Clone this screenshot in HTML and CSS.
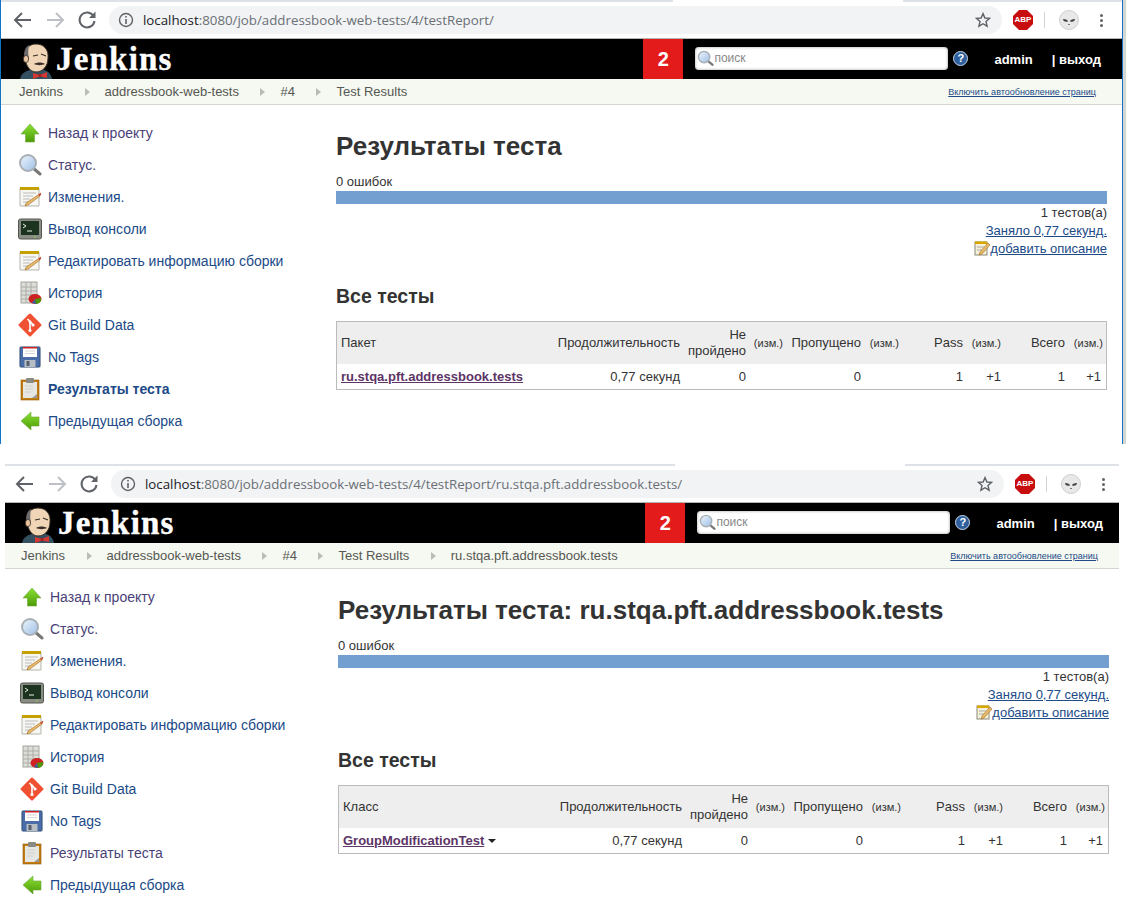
FILE: index.html
```html
<!DOCTYPE html>
<html lang="ru">
<head>
    <meta charset="UTF-8">
    <title>Jenkins test report</title>
    <link rel="stylesheet" href="styles.css">
</head>
<body>
    <svg class="sprite" xmlns="http://www.w3.org/2000/svg">
        <defs>
            <linearGradient id="g-green" x1="0" y1="0" x2="0" y2="1">
                <stop offset="0" stop-color="#8ae234"/>
                <stop offset="1" stop-color="#4e9a06"/>
            </linearGradient>
            <linearGradient id="g-lens" x1="0" y1="0" x2="1" y2="1">
                <stop offset="0" stop-color="#eef5fc"/>
                <stop offset="1" stop-color="#9dbfe6"/>
            </linearGradient>
        </defs>
        <symbol id="i-up" viewBox="0 0 24 24">
            <path d="M12 3 21 13H16.5V21H7.5V13H3Z" fill="url(#g-green)" stroke="#6da83a" stroke-width=".6"/>
        </symbol>
        <symbol id="i-left" viewBox="0 0 24 24">
            <path d="M3 12 13 3V8H21V17H13V21Z" fill="url(#g-green)" stroke="#6da83a" stroke-width=".6"/>
        </symbol>
        <symbol id="i-search" viewBox="0 0 24 24">
            <path d="M15 15 22 21" stroke="#777" stroke-width="3" stroke-linecap="round"/>
            <circle cx="10" cy="10" r="8" fill="url(#g-lens)" stroke="#a9b0b5" stroke-width="2"/>
        </symbol>
        <symbol id="i-note" viewBox="0 0 24 24">
            <path d="M2 3H21V21H2Z" fill="#f6f6f2" stroke="#b5b5ad"/>
            <path d="M2 2H21V5H2Z" fill="#c4a000"/>
            <path d="M5 8H18M5 11H15M5 14H12M5 17H10" stroke="#bbb"/>
            <path d="M8 18 20 10 23 8 22 11 10 20 7 21Z" fill="#e9b96e" stroke="#8f5902" stroke-width=".5"/>
            <path d="M20 10 23 8 22 11Z" fill="#cc3333"/>
        </symbol>
        <symbol id="i-console" viewBox="0 0 24 24">
            <rect x="0.5" y="2" width="23" height="20" rx="2" fill="#8a8d85" stroke="#55574f"/>
            <rect x="3" y="4" width="18" height="14" fill="#1c3320"/>
            <path d="M5 7 8 9 5 11" fill="none" stroke="#e6f2e6"/>
            <path d="M9 14H14" stroke="#e6f2e6"/>
            <rect x="16" y="19.5" width="1.5" height="1" fill="#8ae234"/>
        </symbol>
        <symbol id="i-history" viewBox="0 0 24 24">
            <rect x="3" y="1" width="16" height="21" fill="#dcdcd8" stroke="#a5a5a0"/>
            <path d="M3 6H19M3 10H19M3 14H19M3 18H19M8 1V22M13 1V22" stroke="#a5a5a0" stroke-width=".8"/>
            <ellipse cx="17" cy="18" rx="6.5" ry="5" fill="#cc2222"/>
            <path d="M17 18 23 17A6 5 0 0 1 18 23Z" fill="#4e9a06"/>
            <path d="M17 18 18 23 14 22Z" fill="#3465a4"/>
        </symbol>
        <symbol id="i-git" viewBox="0 0 24 24">
            <rect x="3.5" y="3.5" width="17" height="17" rx="1.5" fill="#f05133" transform="rotate(45 12 12)"/>
            <path d="M9.5 6 15 11.5M12 9V18" stroke="#fff" stroke-width="1.6" fill="none"/>
            <circle cx="15" cy="12" r="1.6" fill="#fff"/>
            <circle cx="12" cy="17.5" r="1.6" fill="#fff"/>
            <circle cx="12" cy="9" r="1.4" fill="#fff"/>
        </symbol>
        <symbol id="i-floppy" viewBox="0 0 24 24">
            <rect x="1" y="1" width="22" height="22" fill="#eef0ea"/>
            <rect x="2" y="2" width="20" height="20" rx="1" fill="#4a6da7" stroke="#33507f"/>
            <rect x="5" y="2" width="14" height="10" fill="#fff"/>
            <rect x="5" y="2" width="14" height="1.5" fill="#cc2222"/>
            <path d="M7 6H17M7 8.5H17" stroke="#d5d5d5"/>
            <rect x="6.5" y="15" width="11" height="7" fill="#b8bdc4"/>
            <rect x="8.5" y="16" width="3" height="5" fill="#555f6e"/>
        </symbol>
        <symbol id="i-clip" viewBox="0 0 24 24">
            <rect x="3" y="3" width="18" height="20" fill="#c17d11" stroke="#8f5902" stroke-width=".6"/>
            <rect x="5" y="5" width="14" height="16" fill="#e6e6e3"/>
            <path d="M7 9H15M7 12H15M7 15H13" stroke="#d0d0cc"/>
            <path d="M14 21 19 17V21Z" fill="#999"/>
            <rect x="8" y="1" width="8" height="5" rx="1" fill="#888a85"/>
        </symbol>
        <symbol id="i-pad" viewBox="0 0 16 16">
            <rect x="1" y="2" width="12" height="13" fill="#f4f1d8" stroke="#8a8a7a"/>
            <path d="M1 1.5H13V4H1Z" fill="#d8a800"/>
            <path d="M3 7H10M3 10H8" stroke="#aaa"/>
            <path d="M6 12 14 3 16 5 8 14 5 15Z" fill="#e9b96e" stroke="#8f5902" stroke-width=".5"/>
        </symbol>
        <symbol id="i-butler" viewBox="0 0 32 36">
            <path d="M0 36C1 30 6 28 10 27L24 27C28 28 31 31 32 36Z" fill="#335061"/>
            <path d="M5 15C4 6 9 1 16 1 24 1 29 7 28 15 28 23 23 29 16 29 10 29 6 23 5 15Z" fill="#f0d6b7" stroke="#3a2f28" stroke-width="1"/>
            <path d="M5 15C3 10 5 4 9 2 8 7 8 12 9 15 8 19 6 19 5 15Z" fill="#6d6b6d"/>
            <ellipse cx="6" cy="16" rx="2.6" ry="3.6" fill="#eac4a0" stroke="#3a2f28" stroke-width=".8"/>
            <path d="M13 13 18 12M21 11 26 13" stroke="#3a2f28" stroke-width="1.2" fill="none"/>
            <path d="M14 21C17 19 22 19 25 21 22 22.5 17 22.5 14 21Z" fill="#3a2f28"/>
            <path d="M13 30 20 32 27 29 27 35 20 33.5 13 36Z" fill="#d33833"/>
            <rect x="18.5" y="31" width="3" height="3" fill="#a82320"/>
        </symbol>
        <symbol id="i-back" viewBox="0 0 24 24">
            <path d="M20 12H5M11 5 4 12 11 19" fill="none" stroke="currentColor" stroke-width="2"/>
        </symbol>
        <symbol id="i-forward" viewBox="0 0 24 24">
            <path d="M4 12H19M13 5 20 12 13 19" fill="none" stroke="currentColor" stroke-width="2"/>
        </symbol>
        <symbol id="i-reload" viewBox="0 0 24 24">
            <path d="M18.5 8A7.5 7.5 0 1 0 19.5 13" fill="none" stroke="currentColor" stroke-width="2"/>
            <path d="M14 10H20.5V3.5Z" fill="currentColor"/>
        </symbol>
        <symbol id="i-info" viewBox="0 0 16 16">
            <circle cx="8" cy="8" r="6.5" fill="none" stroke="currentColor" stroke-width="1.4"/>
            <path d="M7.2 7H8.8V12H7.2ZM7.2 4H8.8V5.6H7.2Z" fill="currentColor"/>
        </symbol>
        <symbol id="i-star" viewBox="0 0 16 16">
            <path d="M8 1.6 9.9 6 14.6 6.4 11 9.5 12.1 14.2 8 11.7 3.9 14.2 5 9.5 1.4 6.4 6.1 6Z" fill="none" stroke="currentColor" stroke-width="1.4"/>
        </symbol>
        <symbol id="i-avatar" viewBox="0 0 20 20">
            <circle cx="10" cy="10" r="9.5" fill="#e8e8e8" stroke="#cfcfcf"/>
            <path d="M4 9C7 9 9 10 9 11.5 6 12.5 4 11 4 9ZM16 9C13 9 11 10 11 11.5 14 12.5 16 11 16 9Z" fill="#444"/>
            <path d="M9 14.5H11" stroke="#777"/>
        </symbol>
    </svg>

    <section class="shot shot-a">
        <div class="window">
            <div class="tabstrip"><span class="tabstrip-gap"></span></div>
            <div class="toolbar">
                <svg class="tool tool-dark"><use href="#i-back"/></svg>
                <svg class="tool tool-off"><use href="#i-forward"/></svg>
                <svg class="tool tool-dark"><use href="#i-reload"/></svg>
                <div class="omnibox">
                    <svg class="omni-icon"><use href="#i-info"/></svg>
                    <span class="url"><b>localhost</b>:8080/job/addressbook-web-tests/4/testReport/</span>
                    <svg class="omni-star"><use href="#i-star"/></svg>
                </div>
                <span class="abp">ABP</span>
                <span class="tool-sep"></span>
                <svg class="avatar"><use href="#i-avatar"/></svg>
                <span class="dots"><i></i><i></i><i></i></span>
            </div>
            <header class="topbar">
                <svg class="butler"><use href="#i-butler"/></svg>
                <span class="brand">Jenkins</span>
                <span class="badge">2</span>
                <div class="search">
                    <svg class="search-icon"><use href="#i-search"/></svg>
                    <span>поиск</span>
                </div>
                <span class="help">?</span>
                <a class="user">admin</a>
                <a class="logout">| выход</a>
            </header>
            <nav class="crumbs">
                <a>Jenkins</a><i></i>
                <a>addressbook-web-tests</a><i></i>
                <a>#4</a><i></i>
                <a>Test Results</a>
                <a class="refresh">Включить автообновление страниц</a>
            </nav>
            <div class="page">
                <ul class="side">
                    <li class="seen"><svg><use href="#i-up"/></svg><a>Назад к проекту</a></li>
                    <li class="seen"><svg><use href="#i-search"/></svg><a>Статус.</a></li>
                    <li><svg><use href="#i-note"/></svg><a>Изменения.</a></li>
                    <li><svg><use href="#i-console"/></svg><a>Вывод консоли</a></li>
                    <li><svg><use href="#i-note"/></svg><a>Редактировать информацию сборки</a></li>
                    <li><svg><use href="#i-history"/></svg><a>История</a></li>
                    <li><svg><use href="#i-git"/></svg><a>Git Build Data</a></li>
                    <li><svg><use href="#i-floppy"/></svg><a>No Tags</a></li>
                    <li class="current"><svg><use href="#i-clip"/></svg><a>Результаты теста</a></li>
                    <li><svg><use href="#i-left"/></svg><a>Предыдущая сборка</a></li>
                </ul>
                <main class="report">
                    <h1>Результаты теста</h1>
                    <div class="fails">0 ошибок</div>
                    <div class="bar"></div>
                    <div class="meta">1 тестов(а)</div>
                    <div class="meta"><a>Заняло 0,77 секунд.</a></div>
                    <div class="meta"><svg class="pad"><use href="#i-pad"/></svg><a>добавить описание</a></div>
                    <h2>Все тесты</h2>
                    <div class="results">
                        <table>
                            <colgroup>
                                <col class="c-name"><col class="c-dur"><col class="c-fail"><col class="c-diff">
                                <col class="c-skip"><col class="c-diff2"><col class="c-num"><col class="c-diff2">
                                <col class="c-num"><col class="c-diff2">
                            </colgroup>
                            <tr>
                                <th class="left">Пакет</th><th>Продолжительность</th><th>Не пройдено</th><th class="diff">(изм.)</th>
                                <th>Пропущено</th><th class="diff">(изм.)</th><th>Pass</th><th class="diff">(изм.)</th>
                                <th>Всего</th><th class="diff">(изм.)</th>
                            </tr>
                            <tr>
                                <td class="left"><a class="pkg">ru.stqa.pft.addressbook.tests</a></td><td>0,77 секунд</td><td>0</td><td></td>
                                <td>0</td><td></td><td>1</td><td>+1</td><td>1</td><td class="last">+1</td>
                            </tr>
                        </table>
                    </div>
                </main>
            </div>
        </div>
        <div class="sliver"></div>
    </section>

    <section class="shot shot-b">
        <div class="window">
            <div class="tabstrip"><span class="tabstrip-gap"></span></div>
            <div class="toolbar">
                <svg class="tool tool-dark"><use href="#i-back"/></svg>
                <svg class="tool tool-off"><use href="#i-forward"/></svg>
                <svg class="tool tool-dark"><use href="#i-reload"/></svg>
                <div class="omnibox">
                    <svg class="omni-icon"><use href="#i-info"/></svg>
                    <span class="url"><b>localhost</b>:8080/job/addressbook-web-tests/4/testReport/ru.stqa.pft.addressbook.tests/</span>
                    <svg class="omni-star"><use href="#i-star"/></svg>
                </div>
                <span class="abp">ABP</span>
                <span class="tool-sep"></span>
                <svg class="avatar"><use href="#i-avatar"/></svg>
                <span class="dots"><i></i><i></i><i></i></span>
            </div>
            <header class="topbar">
                <svg class="butler"><use href="#i-butler"/></svg>
                <span class="brand">Jenkins</span>
                <span class="badge">2</span>
                <div class="search">
                    <svg class="search-icon"><use href="#i-search"/></svg>
                    <span>поиск</span>
                </div>
                <span class="help">?</span>
                <a class="user">admin</a>
                <a class="logout">| выход</a>
            </header>
            <nav class="crumbs">
                <a>Jenkins</a><i></i>
                <a>addressbook-web-tests</a><i></i>
                <a>#4</a><i></i>
                <a>Test Results</a><i></i>
                <a>ru.stqa.pft.addressbook.tests</a>
                <a class="refresh">Включить автообновление страниц</a>
            </nav>
            <div class="page">
                <ul class="side">
                    <li class="seen"><svg><use href="#i-up"/></svg><a>Назад к проекту</a></li>
                    <li class="seen"><svg><use href="#i-search"/></svg><a>Статус.</a></li>
                    <li><svg><use href="#i-note"/></svg><a>Изменения.</a></li>
                    <li><svg><use href="#i-console"/></svg><a>Вывод консоли</a></li>
                    <li><svg><use href="#i-note"/></svg><a>Редактировать информацию сборки</a></li>
                    <li><svg><use href="#i-history"/></svg><a>История</a></li>
                    <li><svg><use href="#i-git"/></svg><a>Git Build Data</a></li>
                    <li><svg><use href="#i-floppy"/></svg><a>No Tags</a></li>
                    <li class="seen"><svg><use href="#i-clip"/></svg><a>Результаты теста</a></li>
                    <li><svg><use href="#i-left"/></svg><a>Предыдущая сборка</a></li>
                </ul>
                <main class="report">
                    <h1>Результаты теста: ru.stqa.pft.addressbook.tests</h1>
                    <div class="fails">0 ошибок</div>
                    <div class="bar"></div>
                    <div class="meta">1 тестов(а)</div>
                    <div class="meta"><a>Заняло 0,77 секунд.</a></div>
                    <div class="meta"><svg class="pad"><use href="#i-pad"/></svg><a>добавить описание</a></div>
                    <h2>Все тесты</h2>
                    <div class="results">
                        <table>
                            <colgroup>
                                <col class="c-name"><col class="c-dur"><col class="c-fail"><col class="c-diff">
                                <col class="c-skip"><col class="c-diff2"><col class="c-num"><col class="c-diff2">
                                <col class="c-num"><col class="c-diff2">
                            </colgroup>
                            <tr>
                                <th class="left">Класс</th><th>Продолжительность</th><th>Не пройдено</th><th class="diff">(изм.)</th>
                                <th>Пропущено</th><th class="diff">(изм.)</th><th>Pass</th><th class="diff">(изм.)</th>
                                <th>Всего</th><th class="diff">(изм.)</th>
                            </tr>
                            <tr>
                                <td class="left"><a class="pkg">GroupModificationTest</a><span class="caret"></span></td><td>0,77 секунд</td><td>0</td><td></td>
                                <td>0</td><td></td><td>1</td><td>+1</td><td>1</td><td class="last">+1</td>
                            </tr>
                        </table>
                    </div>
                </main>
            </div>
        </div>
    </section>
</body>
</html>
```

FILE: styles.css
```css
body {
    margin: 0;
    font-family: "Liberation Sans", Arial, sans-serif;
    font-size: 13px;
    color: #333;
    background: #fff;
}
ul {
    list-style: none;
    margin: 0;
    padding: 0;
}
/* not display:none, the gradients in it would stop working */
.sprite {
    position: absolute;
    width: 0;
    height: 0;
}

/* the two captures */
.shot {
    display: flex;
    overflow: hidden;
}
.shot-a {
    --pad-l: 2px;
    --pad-r: 21px;
    height: 444px;
    margin-bottom: 20px;
}
.shot-a .window {
    width: 1121px;
    border-left: 1px solid #1474c4;
    border-right: 1px solid #1474c4;
}
.sliver {
    flex: 1;
    background: #d4d6d4;
}
.shot-b {
    --pad-l: 0px;
    --pad-r: 16px;
    height: 441px;
    margin-left: 5px;
}
.shot-b .window {
    width: 1114px;
}

/* browser chrome */
.tabstrip {
    height: 2px;
    background: #dee1e6;
    padding-left: calc(670px + var(--pad-l));
}
.tabstrip-gap {
    display: block;
    width: 230px;
    height: 2px;
    background: #fff;
}
.toolbar {
    display: flex;
    align-items: center;
    height: 36px;
    padding-left: calc(8px + var(--pad-l));
    border-bottom: 1px solid #b4b4b4;
    box-sizing: content-box;
}
.tool {
    width: 24px;
    height: 24px;
    margin-right: 8px;
}
.tool-dark {
    color: #5f6368;
}
.tool-off {
    color: #bdc1c6;
}
.omnibox {
    display: flex;
    align-items: center;
    width: 893px;
    height: 28px;
    margin-left: 2px;
    flex-shrink: 0;
    border-radius: 14px;
    background: #f1f3f4;
}
.omni-icon {
    width: 16px;
    height: 16px;
    margin-left: 9px;
    color: #5f6368;
}
.url {
    margin-left: 9px;
    font-family: "Open Sans", sans-serif;
    font-size: 13.3px;
    color: #6b7076;
    white-space: nowrap;
}
.url b {
    font-weight: 400;
    color: #202124;
}
.omni-star {
    width: 16px;
    height: 16px;
    margin-left: auto;
    margin-right: 11px;
    color: #5f6368;
}
.abp {
    width: 20px;
    height: 20px;
    margin-left: 11px;
    flex-shrink: 0;
    clip-path: polygon(30% 0, 70% 0, 100% 30%, 100% 70%, 70% 100%, 30% 100%, 0 70%, 0 30%);
    background: #c70d0d;
    color: #fff;
    font-size: 8px;
    font-weight: bold;
    line-height: 20px;
    text-align: center;
}
.tool-sep {
    width: 1px;
    height: 16px;
    margin-left: 11px;
    background: #d0d2d4;
}
.avatar {
    width: 20px;
    height: 20px;
    margin-left: 14px;
    flex-shrink: 0;
}
.dots {
    display: flex;
    flex-direction: column;
    gap: 2px;
    margin-left: 21px;
}
.dots i {
    width: 3px;
    height: 3px;
    border-radius: 50%;
    background: #5f6368;
}

/* jenkins header */
.topbar {
    display: flex;
    align-items: center;
    height: 40px;
    padding: 0 var(--pad-r) 0 var(--pad-l);
    background: #000;
    color: #fff;
}
.butler {
    width: 32px;
    height: 36px;
    margin: 4px 0 0 17px;
}
.brand {
    margin-left: 4px;
    font-family: "Liberation Serif", serif;
    font-size: 33px;
    font-weight: bold;
    letter-spacing: 1.2px;
    -webkit-text-stroke: 0.4px #fff;
}
.badge {
    width: 40px;
    height: 40px;
    margin-left: auto;
    background: #e31b1b;
    font-size: 20px;
    font-weight: bold;
    line-height: 40px;
    text-align: center;
}
.search {
    display: flex;
    align-items: center;
    width: 253px;
    height: 23px;
    margin: 0 0 2px 12px;
    border-radius: 4px;
    background: #fff;
    box-shadow: inset 0 0 3px #999;
    color: #888;
    font-size: 12px;
}
.search-icon {
    width: 17px;
    height: 17px;
    margin-left: 2px;
}
.help {
    width: 13px;
    height: 13px;
    margin: 0 0 2px 5px;
    border: 1.5px solid #c8d6e8;
    border-radius: 50%;
    background: #2f5f9e;
    font-size: 11px;
    font-weight: bold;
    line-height: 13px;
    text-align: center;
}
.user {
    margin-left: 26px;
    font-weight: bold;
}
.logout {
    margin-left: 19px;
    font-weight: bold;
}

/* breadcrumbs */
.crumbs {
    display: flex;
    align-items: center;
    height: 25px;
    padding: 0 calc(var(--pad-r) + 5px) 0 calc(16px + var(--pad-l));
    border-bottom: 1px solid #d3d7cf;
    background: #f5f9f1;
    color: #555753;
    font-size: 13px;
}
.crumbs i {
    width: 0;
    height: 0;
    margin: 0 15px 0 21.5px;
    border-left: 5px solid #babdb6;
    border-top: 4px solid transparent;
    border-bottom: 4px solid transparent;
}
.refresh {
    margin-left: auto;
    font-size: 9px;
    color: #204a87;
    text-decoration: underline;
}

/* content */
.page {
    display: grid;
    grid-template-columns: 333px 771px;
    padding-left: var(--pad-l);
}
.side {
    padding-top: 12px;
}
.side li {
    display: flex;
    align-items: center;
    gap: 6px;
    height: 32px;
    padding-left: 15px;
    font-size: 14px;
    color: #204a87;
}
.side svg {
    width: 24px;
    height: 24px;
    flex-shrink: 0;
}
.side .seen {
    color: #4a3f78;
}
.side .current {
    font-weight: bold;
}
.report {
    padding-top: 25px;
}
h1 {
    margin: 0;
    font-size: 26px;
    line-height: 32px;
}
.fails {
    margin-top: 12px;
    font-size: 13px;
    line-height: 16px;
}
.bar {
    height: 13px;
    margin-top: 1px;
    background: #729fcf;
}
.meta {
    font-size: 13px;
    line-height: 18px;
    text-align: right;
}
.meta a {
    color: #204a87;
    text-decoration: underline;
}
.pad {
    width: 16px;
    height: 16px;
    vertical-align: -3px;
}
h2 {
    margin: 26px 0 13px;
    font-size: 19.5px;
    line-height: 24px;
}
.results {
    border: 1px solid #bbb;
}
table {
    width: 769px;
    border-collapse: collapse;
    table-layout: fixed;
}
th,
td {
    padding: 0 3px;
    text-align: right;
    font-size: 13px;
    line-height: 16px;
}
th {
    height: 42px;
    background: #eee;
    font-weight: normal;
}
td {
    height: 25px;
}
.left {
    text-align: left;
    padding-left: 4px;
}
.diff {
    padding-left: 0;
    font-size: 11px;
}
td.last {
    padding-right: 5px;
}
.c-name { width: 216px; }
.c-dur { width: 130px; }
.c-fail { width: 66px; }
.c-diff { width: 37px; }
.c-skip { width: 78px; }
.c-diff2 { width: 38px; }
.c-num { width: 64px; }
.pkg {
    color: #5c3566;
    font-weight: bold;
    text-decoration: underline;
}
.caret {
    display: inline-block;
    margin-left: 4px;
    vertical-align: 2px;
    border-top: 4px solid #222;
    border-left: 4px solid transparent;
    border-right: 4px solid transparent;
}
```
